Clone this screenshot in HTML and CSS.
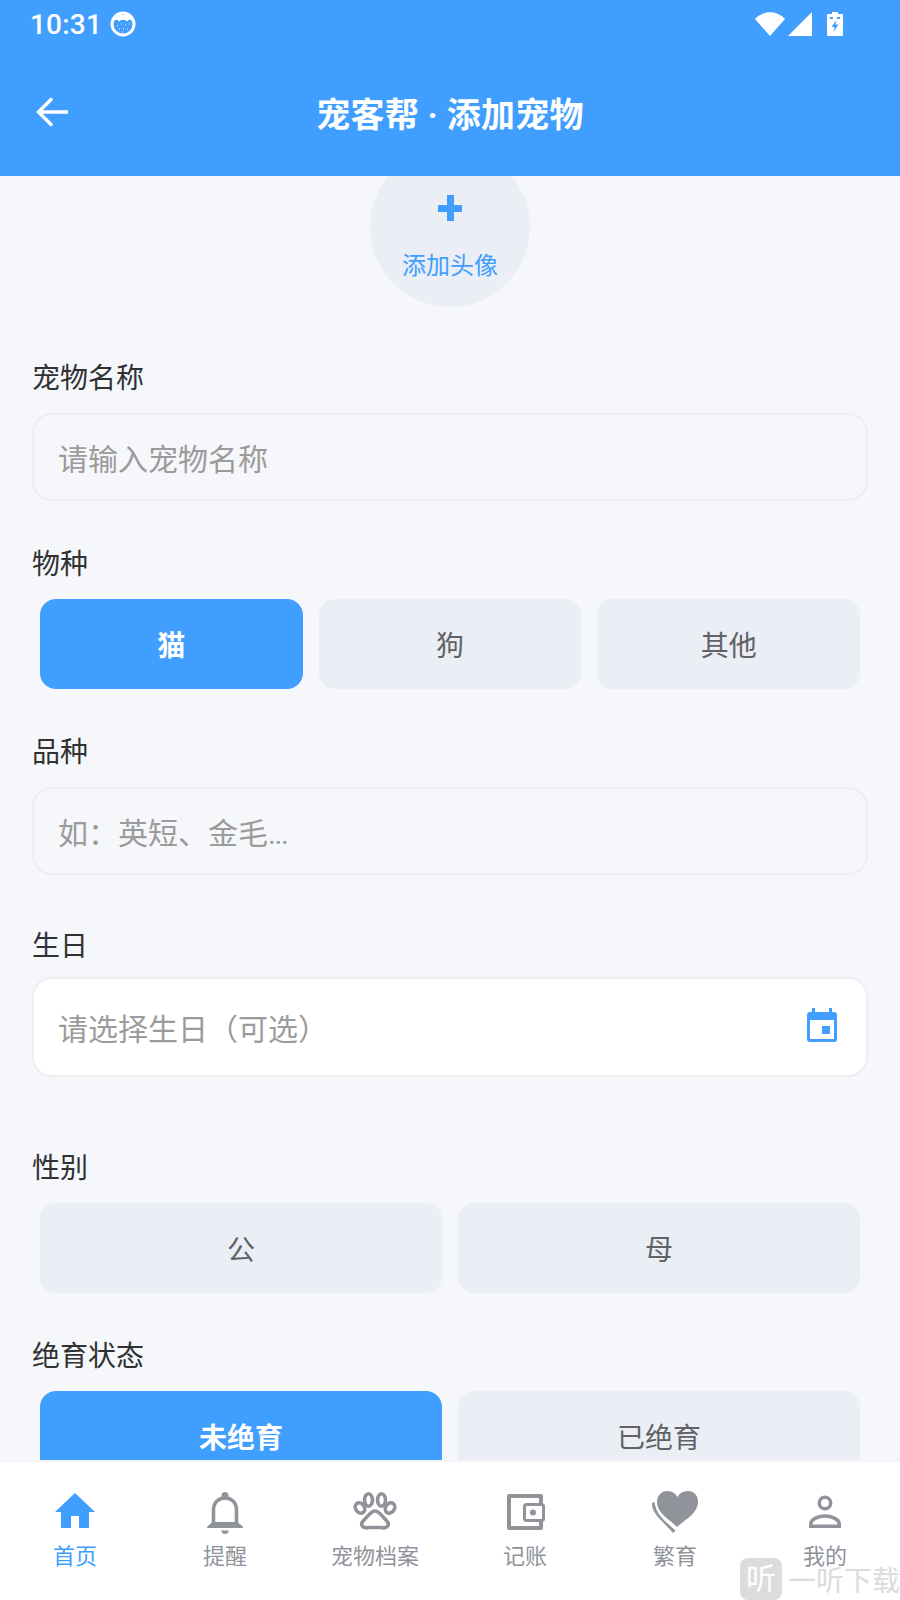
FILE: index.html
```html
<!DOCTYPE html>
<html lang="zh-CN">

<head>
    <meta charset="utf-8">
    <meta name="viewport" content="width=device-width, initial-scale=1">
    <title>宠客帮 · 添加宠物</title>
    <link rel="stylesheet" href="styles.css">
</head>

<body>
    <div class="app">
        <header class="top">
            <div class="status">
                <span class="time">10:31</span>
                <svg class="cat" viewBox="0 0 26 26">
                    <circle cx="13" cy="13" r="11" fill="none" stroke="#fff" stroke-width="3"/>
                    <path d="M3 10 L7 4 H19 L23 10 L19 8.500 L17 10.500 L15 9 H11 L9 10.500 L7 8.500 Z" fill="#fff"/>
                    <path d="M7 15h1M11 13h1M15 14h1M19 13h1M9 18h1M13 18h1M17 18h1M12 21h1" stroke="#fff" stroke-width="1"/>
                </svg>
                <span class="status-right">
                    <svg class="wifi" viewBox="0 0 30 24"><path d="M0 7 C8 -2 22 -2 30 7 L15 24 Z" fill="#fff"/></svg>
                    <svg class="signal" viewBox="0 0 24 24"><path d="M24 0 V24 H0 Z" fill="#fff"/></svg>
                    <svg class="battery" viewBox="0 0 16 24">
                        <path d="M5 0 H11 V2 H15 Q16 2 16 3 V23 Q16 24 15 24 H1 Q0 24 0 23 V3 Q0 2 1 2 H5 Z" fill="#fff"/>
                        <path d="M9.500 8 L4.500 15 H7.500 L6.500 20 L11.500 12.500 H8.500 Z" fill="#409eff"/>
                        <path d="M3 5h3v2H3zM10 5h3v2h-3z" fill="#409eff"/>
                    </svg>
                </span>
            </div>
            <div class="bar">
                <svg class="back" viewBox="0 0 32 30"><path d="M16 1.500 L2.500 15 L16 28.500 M2.500 15 H32" fill="none" stroke="#fff" stroke-width="3.400"/></svg>
                <h1>宠客帮 · 添加宠物</h1>
            </div>
        </header>

        <main class="form">
            <div class="avatar">
                <span class="plus"></span>
                <span class="avatar-text">添加头像</span>
            </div>

            <label class="label name-label">宠物名称</label>
            <div class="input">请输入宠物名称</div>

            <label class="label kind-label">物种</label>
            <div class="options">
                <div class="opt active">猫</div>
                <div class="opt">狗</div>
                <div class="opt">其他</div>
            </div>

            <label class="label breed-label">品种</label>
            <div class="input"><span>如：英短、金毛<span class="dots">...</span></span></div>

            <label class="label birth-label">生日</label>
            <div class="input date">
                <span>请选择生日（可选）</span>
                <svg class="cal" viewBox="0 0 30 34">
                    <path d="M5 0h3v4h14V0h3v4h2q3 0 3 3v24q0 3-3 3H3q-3 0-3-3V7q0-3 3-3h2z" fill="#409eff"/>
                    <path d="M3 12h24v19H3z" fill="#fff"/>
                    <path d="M15 18h8v8h-8z" fill="#409eff"/>
                </svg>
            </div>

            <label class="label sex-label">性别</label>
            <div class="options">
                <div class="opt">公</div>
                <div class="opt">母</div>
            </div>

            <label class="label neuter-label">绝育状态</label>
            <div class="options">
                <div class="opt active">未绝育</div>
                <div class="opt">已绝育</div>
            </div>
        </main>

        <nav class="tabs">
            <div class="tab on">
                <svg viewBox="0 0 48 48"><path d="M24 5 L44 24 H38 V40 H28 V28 H20 V40 H10 V24 H4 Z" fill="#409eff"/></svg>
                <span>首页</span>
            </div>
            <div class="tab">
                <svg viewBox="0 0 48 48">
                    <circle cx="24" cy="7.500" r="3.500" fill="#909399"/>
                    <path d="M12.500 37 V22 C12.500 14 18 10 24 10 C30 10 35.500 14 35.500 22 V37" fill="none" stroke="#909399" stroke-width="3.600"/>
                    <path d="M6 40 Q6 38 8 37 Q10 36 11 34 H37 Q38 36 40 37 Q42 38 42 40 Z" fill="#909399"/>
                    <path d="M20 42.500 H28 Q27 46 24 46 Q21 46 20 42.500 Z" fill="#909399"/>
                </svg>
                <span>提醒</span>
            </div>
            <div class="tab">
                <svg viewBox="0 0 48 48">
                    <g fill="none" stroke="#909399" stroke-width="3.600">
                        <ellipse cx="17.500" cy="12" rx="4" ry="6.200"/>
                        <ellipse cx="30.500" cy="12" rx="4" ry="6.200"/>
                        <ellipse cx="9" cy="20" rx="4.400" ry="5.500" transform="rotate(-35 9 20)"/>
                        <ellipse cx="39" cy="20" rx="4.400" ry="5.500" transform="rotate(35 39 20)"/>
                        <path d="M24 23 C20 23 18 27 13 32 C8 37 12 41 18 39.500 H30 C36 41 40 37 35 32 C30 27 28 23 24 23 Z"/>
                    </g>
                </svg>
                <span>宠物档案</span>
            </div>
            <div class="tab">
                <svg viewBox="0 0 48 48">
                    <path d="M40 15 V8 H8 V40 H40 V34" fill="none" stroke="#909399" stroke-width="4" stroke-linejoin="round"/>
                    <rect x="23.500" y="16.500" width="19" height="16" rx="2" fill="none" stroke="#909399" stroke-width="3"/>
                    <circle cx="32" cy="24.500" r="3" fill="#909399"/>
                </svg>
                <span>记账</span>
            </div>
            <div class="tab">
                <svg viewBox="0 0 48 48">
                    <path d="M26 39 C18 31 6 25 6 14 C6 7 11 3 16 3 C21 3 24.500 5 26.500 9 C28.500 5 32 3 37 3 C43 3 47 7 47 14 C47 25 35 31 26 39 Z" fill="#909399"/>
                    <path d="M1 15 C0 26 14 35 22 45 L24.500 42.500 C14 33 5 27 3.500 14 Z" fill="#909399"/>
                </svg>
                <span>繁育</span>
            </div>
            <div class="tab">
                <svg viewBox="0 0 48 48">
                    <circle cx="24" cy="15" r="5.700" fill="none" stroke="#909399" stroke-width="3.500"/>
                    <path d="M9.800 38.200 V36 C9.800 31 18 28 24 28 C30 28 38.200 31 38.200 36 V38.200 Z" fill="none" stroke="#909399" stroke-width="3.600"/>
                </svg>
                <span>我的</span>
            </div>
        </nav>

        <div class="mark">
            <span class="mark-logo">听</span>
            <span class="mark-text">一听下载</span>
        </div>
    </div>
</body>

</html>
```

FILE: styles.css
```css
html {
    box-sizing: border-box;
    height: 100%;
}

*,
*:before,
*:after {
    box-sizing: inherit;
}

body {
    font-family: Roboto, "Noto Sans CJK SC", sans-serif;
    margin: 0;
}

.app {
    background: #f5f7fa;
    display: flex;
    flex-direction: column;
    height: 1600px;
    overflow: hidden;
    position: relative;
    width: 900px;
}

.top {
    background: #409eff;
    color: #fff;
    flex: none;
    height: 176px;
    position: relative;
    z-index: 1;
}

.status {
    align-items: center;
    display: flex;
    height: 48px;
    padding: 0 57px 0 30px;
}

.time {
    font-size: 28px;
    font-weight: 500;
    letter-spacing: 0.2px;
}

.cat {
    height: 26px;
    margin-left: 8px;
    width: 26px;
}

.status-right {
    align-items: center;
    display: flex;
    margin-left: auto;
}

.wifi {
    height: 24px;
    margin-right: 3px;
    width: 30px;
}

.signal {
    height: 24px;
    margin-right: 15px;
    width: 24px;
}

.battery {
    height: 24px;
    width: 16px;
}

.bar {
    align-items: center;
    display: flex;
    height: 128px;
    justify-content: center;
    position: relative;
}

.back {
    height: 30px;
    left: 36px;
    position: absolute;
    top: 49px;
    width: 32px;
}

.bar h1 {
    font-size: 34px;
    font-weight: 700;
    letter-spacing: 0.25px;
    margin: 0;
}

.form {
    flex: 1;
    min-height: 0;
    overflow: hidden;
    padding: 0 32px;
}

.avatar {
    align-items: center;
    background: #ebeef5;
    border-radius: 50%;
    display: flex;
    flex-direction: column;
    height: 160px;
    margin: -29px auto 0;
    padding-top: 48px;
    width: 160px;
}

.plus {
    background: linear-gradient(#409eff, #409eff) center / 24px 7px no-repeat, linear-gradient(#409eff, #409eff) center / 7px 26px no-repeat;
    flex: none;
    height: 26px;
    width: 24px;
}

.avatar-text {
    color: #409eff;
    font-size: 24px;
    line-height: 34px;
    margin-top: 28px;
}

.label {
    color: #303133;
    display: block;
    font-size: 28px;
    line-height: 40px;
}

.name-label {
    margin-top: 52px;
    margin-bottom: 14px;
}

.kind-label {
    margin-top: 44px;
    margin-bottom: 14px;
}

.breed-label {
    margin-top: 44px;
    margin-bottom: 14px;
}

.birth-label {
    margin-top: 52px;
    margin-bottom: 10px;
}

.sex-label {
    margin-top: 72px;
    margin-bottom: 14px;
}

.neuter-label {
    margin-top: 44px;
    margin-bottom: 14px;
}

.input {
    align-items: center;
    border: 2px solid #eceef2;
    border-radius: 20px;
    color: #9b9b9b;
    display: flex;
    font-size: 30px;
    height: 88px;
    padding: 0 24px;
}

.dots {
    letter-spacing: -1.4px;
}

.date {
    background: #fff;
    height: 100px;
    justify-content: space-between;
}

.cal {
    height: 34px;
    margin-bottom: 4px;
    margin-right: 5px;
    width: 30px;
}

.options {
    display: flex;
    gap: 16px;
    padding: 0 8px;
}

.opt {
    align-items: center;
    background: #ebeef5;
    border-radius: 16px;
    color: #606266;
    display: flex;
    flex: 1;
    font-size: 28px;
    height: 90px;
    justify-content: center;
}

.opt.active {
    background: #409eff;
    color: #fff;
    font-weight: 700;
}

.tabs {
    background: #fff;
    border-top: 2px solid #f3f4f7;
    display: flex;
    flex: none;
    height: 140px;
    padding-top: 26px;
    position: relative;
}

.tab {
    align-items: center;
    color: #909399;
    display: flex;
    flex: 1;
    flex-direction: column;
    font-size: 22px;
}

.tab svg {
    flex: none;
    height: 48px;
    width: 48px;
}

.tab span {
    line-height: 30px;
    margin-top: 6px;
}

.tab.on {
    color: #409eff;
}

.mark {
    align-items: center;
    bottom: 0;
    color: #dcdcdc;
    display: flex;
    gap: 6px;
    position: absolute;
    right: 0;
}

.mark-logo {
    background: #dcdcdc;
    border-radius: 8px;
    color: #fff;
    font-size: 30px;
    height: 42px;
    line-height: 42px;
    text-align: center;
    width: 42px;
}

.mark-text {
    font-size: 28px;
}
```
